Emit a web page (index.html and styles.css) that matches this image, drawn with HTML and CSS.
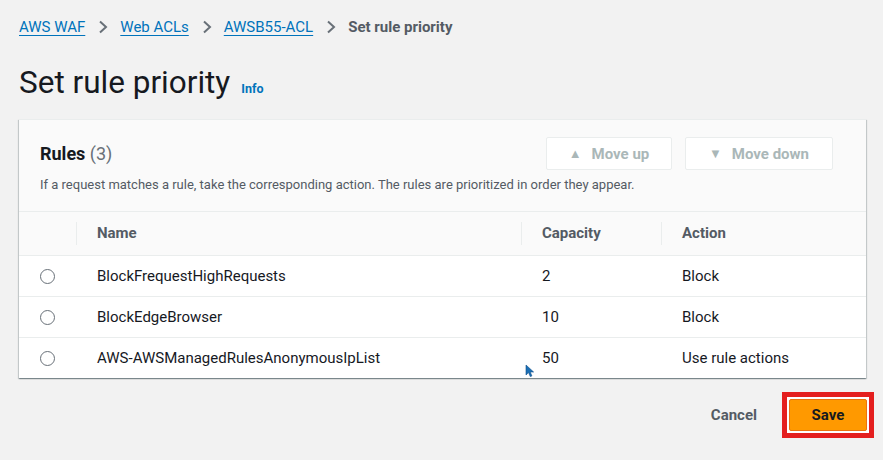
FILE: index.html
```html
<!DOCTYPE html>
<html lang="en">
<head>
<meta charset="utf-8">
<title>Set rule priority</title>
<link rel="stylesheet" href="styles.css">
</head>
<body>
<div class="page">
  <nav class="crumbs">
    <a href="#">AWS WAF</a>
    <span class="sep"><svg width="10" height="14" viewBox="0 0 10 14"><path d="M2 1.5 L8 7 L2 12.5" fill="none" stroke="#687078" stroke-width="2"/></svg></span>
    <a href="#">Web ACLs</a>
    <span class="sep"><svg width="10" height="14" viewBox="0 0 10 14"><path d="M2 1.5 L8 7 L2 12.5" fill="none" stroke="#687078" stroke-width="2"/></svg></span>
    <a href="#">AWSB55-ACL</a>
    <span class="sep"><svg width="10" height="14" viewBox="0 0 10 14"><path d="M2 1.5 L8 7 L2 12.5" fill="none" stroke="#687078" stroke-width="2"/></svg></span>
    <span class="current">Set rule priority</span>
  </nav>

  <div class="title-row">
    <h1>Set rule priority</h1>
    <a class="info" href="#">Info</a>
  </div>

  <section class="card">
    <div class="card-head">
      <div class="head-top">
        <h2>Rules <span class="count">(3)</span></h2>
        <div class="actions">
          <button class="btn-disabled btn-up"><span class="tri">&#9650;</span>Move up</button>
          <button class="btn-disabled btn-down"><span class="tri">&#9660;</span>Move down</button>
        </div>
      </div>
      <p class="desc">If a request matches a rule, take the corresponding action. The rules are prioritized in order they appear.</p>
    </div>
    <table class="rules">
      <thead>
        <tr>
          <th class="c-sel"></th>
          <th class="c-name"><span class="div"></span>Name</th>
          <th class="c-cap"><span class="div"></span>Capacity</th>
          <th class="c-act"><span class="div"></span>Action</th>
        </tr>
      </thead>
      <tbody>
        <tr>
          <td class="c-sel"><span class="radio"></span></td>
          <td>BlockFrequestHighRequests</td>
          <td>2</td>
          <td>Block</td>
        </tr>
        <tr>
          <td class="c-sel"><span class="radio"></span></td>
          <td>BlockEdgeBrowser</td>
          <td>10</td>
          <td>Block</td>
        </tr>
        <tr>
          <td class="c-sel"><span class="radio"></span></td>
          <td>AWS-AWSManagedRulesAnonymousIpList</td>
          <td>50</td>
          <td>Use rule actions</td>
        </tr>
      </tbody>
    </table>
  </section>

  <div class="footer">
    <button class="btn-cancel">Cancel</button>
    <div class="highlight">
      <button class="btn-save">Save</button>
    </div>
  </div>
</div>
<svg class="cursor" width="10" height="14" viewBox="0 0 10 14"><path d="M1 1 L1 11 L3.5 8.6 L5.3 12.6 L6.9 11.9 L5.2 8 L8.6 8 Z" fill="#1b6fb5" stroke="#0f4f8a" stroke-width="0.6"/></svg>
</body>
</html>
```

FILE: styles.css
```css
* { box-sizing: border-box; }
html, body {
  margin: 0;
  padding: 0;
  background: #f2f2f2;
  font-family: Roboto, "Liberation Sans", Arial, sans-serif;
  color: #16191f;
}
.page {
  padding: 16px 17px 0 19px;
}
.crumbs {
  display: flex;
  align-items: center;
  height: 22px;
  font-size: 15px;
}
.crumbs a {
  color: #0073bb;
  text-decoration: underline;
  text-underline-offset: 3px;
  text-decoration-thickness: 1px;
}
.crumbs .sep {
  display: inline-flex;
  margin: 0 12px 0 13px;
}
.crumbs .current {
  color: #545b64;
  font-weight: 700;
}
.title-row {
  display: flex;
  align-items: baseline;
  margin-top: 25px;
  height: 40px;
}
h1 {
  margin: 0;
  font-size: 31.5px;
  font-weight: 400;
  line-height: 40px;
  color: #16191f;
}
.info {
  margin-left: 11px;
  font-size: 12.5px;
  font-weight: 700;
  color: #0073bb;
  text-decoration: none;
}
.card {
  margin-top: 16px;
  background: #fff;
  box-shadow: 0 1px 1px 0 rgba(0,28,36,0.3), 1px 1px 1px 0 rgba(0,28,36,0.15), -1px 1px 1px 0 rgba(0,28,36,0.15);
  border-top: 1px solid #eaeded;
}
.card-head {
  background: #fafafa;
  padding: 17px 33px 0 21px;
  height: 92px;
  border-bottom: 1px solid #eaeded;
}
.head-top {
  display: flex;
  justify-content: space-between;
  align-items: flex-start;
}
h2 {
  margin: 6px 0 0;
  font-size: 18px;
  font-weight: 700;
  line-height: 22px;
}
h2 .count {
  font-weight: 400;
  color: #687078;
}
.actions {
  display: flex;
  gap: 13px;
}
.btn-disabled {
  height: 33px;
  background: #fff;
  border: 1px solid #eaeded;
  border-radius: 2px;
  color: #aab7b8;
  font-family: inherit;
  font-size: 15px;
  font-weight: 700;
  display: inline-flex;
  align-items: center;
  justify-content: center;
  padding: 0;
}
.btn-up { width: 126px; }
.btn-down { width: 148px; }
.tri {
  font-size: 13px;
  margin-right: 10px;
}
.desc {
  margin: 7px 0 0;
  font-size: 13px;
  color: #545b64;
  line-height: 16px;
}
table.rules {
  width: 100%;
  border-collapse: collapse;
  table-layout: fixed;
}
.rules th, .rules td {
  text-align: left;
  font-size: 15px;
  padding: 0 0 0 21px;
}
.rules thead th {
  background: #fafafa;
  height: 43px;
  font-weight: 700;
  color: #545b64;
  position: relative;
  border-bottom: 1px solid #eaeded;
}
.rules th .div {
  position: absolute;
  left: 0;
  top: 10px;
  bottom: 10px;
  width: 1px;
  background: #eaeded;
}
.rules .c-sel { width: 57px; padding: 0; text-align: center; }
.rules .c-name { width: 445px; }
.rules .c-cap { width: 140px; }
.rules tbody td {
  height: 41px;
  border-bottom: 1px solid #eaeded;
  color: #16191f;
}
.rules tbody tr:last-child td { border-bottom: none; }
.radio {
  display: inline-block;
  width: 15px;
  height: 15px;
  border: 1.5px solid #687078;
  border-radius: 50%;
  vertical-align: middle;
}
.footer {
  display: flex;
  justify-content: flex-end;
  align-items: center;
  margin-top: 14px;
  margin-right: -8px;
}
.btn-cancel {
  background: none;
  border: none;
  font-family: inherit;
  font-size: 15px;
  font-weight: 700;
  color: #545b64;
  padding: 0;
  margin-right: 25px;
}
.highlight {
  border: 5px solid #e41f1f;
  padding: 2px;
  background: #fff;
}
.btn-save {
  display: block;
  width: 78px;
  height: 32px;
  background: #ff9900;
  border: 1px solid #ec7211;
  border-radius: 2px;
  font-family: inherit;
  font-size: 15px;
  font-weight: 700;
  color: #16191f;
  padding: 0;
}
.cursor {
  position: absolute;
  left: 525px;
  top: 364px;
}
```
